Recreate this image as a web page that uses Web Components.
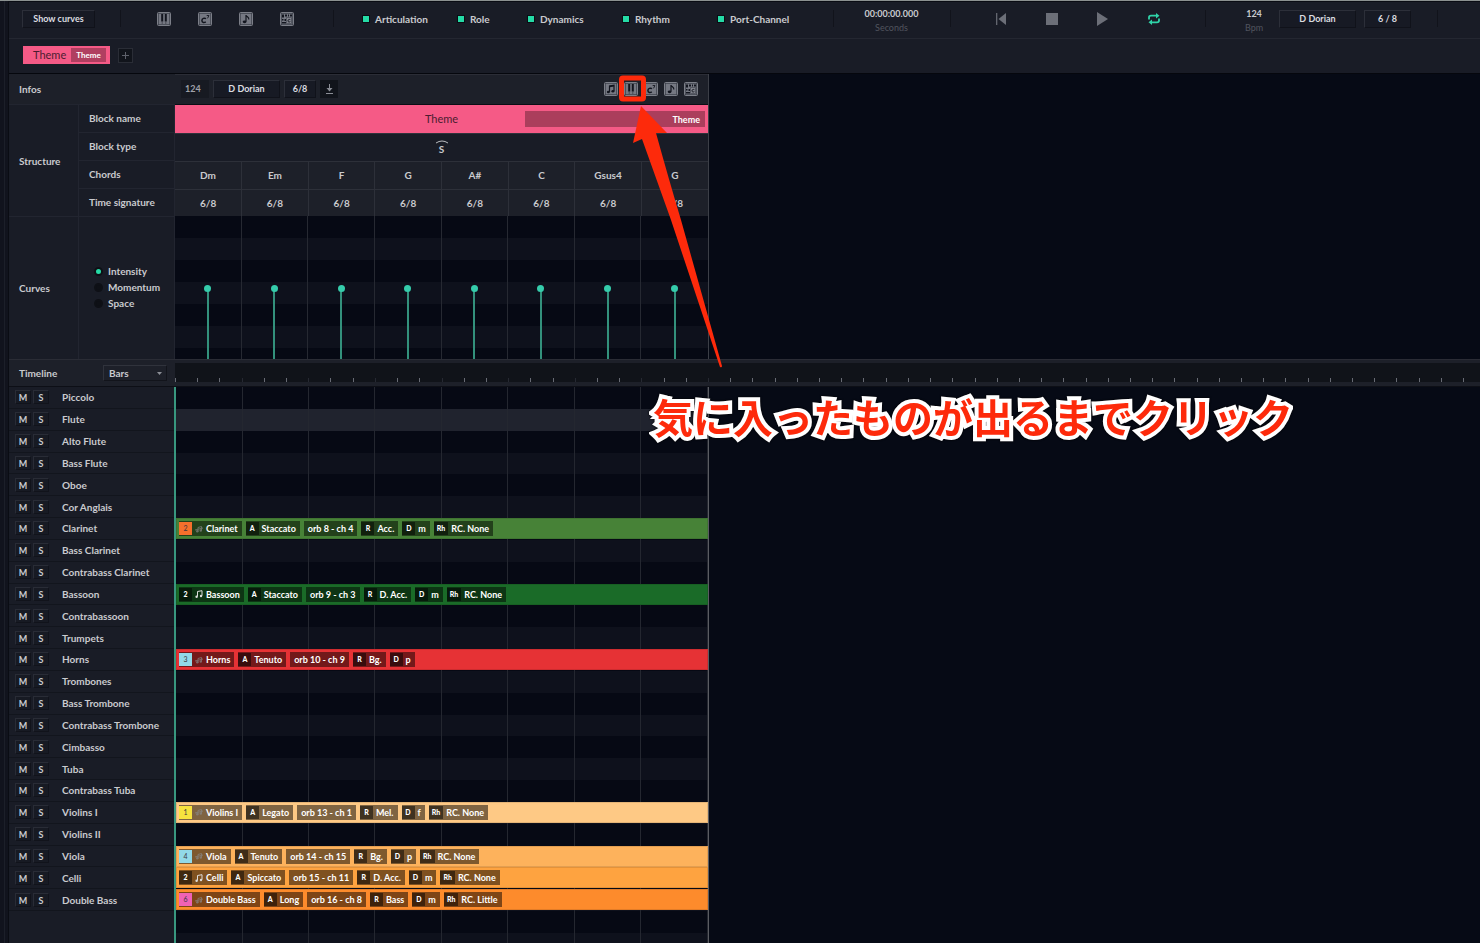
<!DOCTYPE html>
<html lang="en">
<head>
<meta charset="utf-8">
<title>Theme – Orchestration</title>
<style>
  html, body { margin: 0; height: 100%; }
  body { background: #060a15; font: 700 10px/16px Lato, "Noto Sans CJK JP", sans-serif; color: #c9cace; overflow: hidden; }
</style>
</head>
<body>
<orchestra-app></orchestra-app>
<script>
const BASE = `
  *, *::before { box-sizing: border-box; }
  button, input, select { font: inherit; color: inherit; margin: 0; padding: 0; border: 0; background: none; border-radius: 0; appearance: none; }
  svg { display: block; }
`;
const define = (name, html, setup) => customElements.define(name, class extends HTMLElement {
  connectedCallback() {
    if (this.shadowRoot) return;
    const root = this.attachShadow({ mode: 'open' });
    root.innerHTML = `<style>${BASE}</style>` + (typeof html === 'function' ? html(this) : html);
    if (setup) setup(root, this);
  }
});

/* ---------- small parts ---------- */
const GLYPHS = {
  piano: '<path d="M5.200 2v7.500M8.800 2v7.500" stroke="#12151e" stroke-width="2"/><path d="M5.200 9v3M8.800 9v3" stroke="#3c3f49" stroke-width=".8"/>',
  chord: '<path d="M8 6.700C6.500 5.600 4 6.300 3.900 8.600c0 2.200 2.400 2.200 3.900 1.200" fill="none" stroke="#12151e" stroke-width="1.500"/><path d="M8.700 3.500h2.200l-1.300 2.800" fill="none" stroke="#12151e" stroke-width=".9"/>',
  note: '<path d="M7 3v6.500M7 3c.4 2 3.300 2 2.800 4.500" fill="none" stroke="#12151e" stroke-width="1.200"/><ellipse cx="5.600" cy="9.800" rx="1.900" ry="1.400" fill="#12151e"/>',
  notes: '<path d="M5.500 10V4l4.500-.8V9" fill="none" stroke="#12151e" stroke-width="1.200"/><path d="M5.500 4.600l4.500-.8" stroke="#12151e" stroke-width="1.500"/><ellipse cx="4.400" cy="10" rx="1.500" ry="1.200" fill="#12151e"/><ellipse cx="8.900" cy="9.200" rx="1.500" ry="1.200" fill="#12151e"/>',
  all: '<path d="M2 2.500h2v3H2zM5 2.500h2v2H5zM8 2.500h1v2H8zM10 2.500h2v2h-2zM2 7h1.500v1.500H2zM4.500 7H6v2H4.500zM2 10h4v1.500H2z" fill="#12151e"/><path d="M6.500 5.500h5v6h-5z" fill="#80838c" stroke="#3c3f49" stroke-width=".6"/><path d="M10.300 7.600c-1.300-.5-2.300 0-2.300 1.200s1.100 1.400 2.300.8" fill="none" stroke="#12151e"/>'
};
define('tile-button', el => `
  <style>:host { display: block; } button { display: block; width: 14px; height: 14px; }</style>
  <button aria-label="${el.getAttribute('label')}"><svg width="14" height="14" viewBox="0 0 14 14">
    <rect x=".5" y=".5" width="13" height="13" rx="1" fill="#3c3f49" stroke="#7c7f88"/>
    <rect x="1.700" y="1.700" width="10.600" height="10.600" fill="#757882"/>${GLYPHS[el.getAttribute('icon')]}</svg></button>`);

define('box-button', `
  <style>
    :host { display: block; }
    button { display: block; width: 100%; height: 18px; line-height: 16px; border: 1px solid #10121a; border-top-color: #2c2f39; border-left-color: #2c2f39;
      background: #171a24; font-size: 9px; text-align: center; color: #dcdde0; }
  </style><button><slot></slot></button>`);

define('toggle-check', `
  <style>
    :host { display: block; }
    label { display: flex; align-items: center; gap: 6px; white-space: nowrap; }
    input { width: 6px; height: 6px; outline: 1px solid #0b0d14; background: #12141c; }
    input:checked { background: #25dba6; }
  </style><label><input type="checkbox" checked><slot></slot></label>`);

define('icon-button', `
  <style>:host { display: block; } button { display: block; }</style>
  <button><slot></slot></button>`, (root, el) => root.querySelector('button').setAttribute('aria-label', el.getAttribute('label')));

/* ---------- top bars ---------- */
define('tool-bar', `
  <style>
    :host { display: grid; grid-template-columns: 111fr 213fr 500fr 117fr 255fr 232fr 43fr; height: 37px; padding-bottom: 3px; background: #191c26; border-bottom: 1px solid #242731; }
    section { display: flex; align-items: center; min-width: 0; position: relative; }
    section + section::before { content: ""; position: absolute; left: 0; top: 8px; bottom: 8px; width: 1px; background: #11131b; }
    .curves box-button { width: 73px; margin-left: 13px; }
    .tiles { gap: 27px; padding-left: 37px; }
    .toggles { padding-left: 30px; }
    .toggles toggle-check:nth-child(1) { width: 95px; }
    .toggles toggle-check:nth-child(2) { width: 70px; }
    .toggles toggle-check:nth-child(3), .toggles toggle-check:nth-child(4) { width: 95px; }
    .stack { padding-top: 4px; text-align: center; font-size: 9px; line-height: 14px; }
    .stack small { display: block; font-size: 9px; font-weight: 400; color: #51545e; }
    .time { justify-content: center; }
    .transport { justify-content: center; gap: 39px; }
    .tempo { gap: 8px; padding-left: 39px; }
    .tempo .stack { width: 20px; margin-right: 7px; }
    .key { width: 77px; } .sig { width: 47px; }
  </style>
  <section class="curves"><box-button>Show curves</box-button></section>
  <section class="tiles">
    <tile-button icon="piano" label="Piano"></tile-button><tile-button icon="chord" label="Chords"></tile-button>
    <tile-button icon="note" label="Melody"></tile-button><tile-button icon="all" label="All"></tile-button>
  </section>
  <section class="toggles"><toggle-check>Articulation</toggle-check><toggle-check>Role</toggle-check><toggle-check>Dynamics</toggle-check><toggle-check>Rhythm</toggle-check><toggle-check>Port-Channel</toggle-check></section>
  <section class="time"><div class="stack">00:00:00.000<small>Seconds</small></div></section>
  <section class="transport">
    <icon-button label="Rewind"><svg width="12" height="12" viewBox="0 0 12 12"><path d="M1.700 0v12" stroke="#6c6f78" stroke-width="1.200"/><path d="M11 0v12L3.500 6z" fill="#6c6f78"/></svg></icon-button>
    <icon-button label="Stop"><svg width="12" height="12" viewBox="0 0 12 12"><path d="M0 0h12v12H0z" fill="#6c6f78"/></svg></icon-button>
    <icon-button label="Play"><svg width="12" height="14" viewBox="0 0 12 14"><path d="M0 0l11 7-11 7z" fill="#6c6f78"/></svg></icon-button>
    <icon-button label="Loop"><svg width="12" height="12" viewBox="1 0 12 12"><g fill="none" stroke="#2fd3a8" stroke-width="1.800"><path d="M2 6.500V4.500Q2 2.700 4 2.700h6"/><path d="M12 5.500v2q0 1.800-2 1.800H4"/></g><path d="M9 0l3.500 2.700L9 5.400zM5 6.600L1.500 9.300 5 12z" fill="#2fd3a8"/></svg></icon-button>
  </section>
  <section class="tempo"><div class="stack">124<small>Bpm</small></div><box-button class="key">D Dorian</box-button><box-button class="sig">6 / 8</box-button></section>
  <section></section>`);

define('block-bar', `
  <style>
    :host { display: flex; align-items: center; gap: 8px; height: 35px; padding: 0 0 2px 14px; background: #191c26; border-bottom: 1px solid #05070d; }
    .block { display: flex; align-items: center; gap: 5px; height: 18px; padding: 0 4px 0 10px; background: #f55a86; color: #4a1d30; font-size: 11px; font-weight: 400; }
    .block b { height: 14px; line-height: 14px; padding: 0 5px; background: #b03f60; color: #fff; font-size: 8px; }
    .add { width: 15px; height: 15px; background: #11141b; border: 1px solid #2a2d36; }
    .add svg { margin: 3px; }
  </style>
  <button class="block">Theme<b>Theme</b></button>
  <button class="add" aria-label="Add block"><svg width="7" height="7" viewBox="0 0 7 7"><path d="M3.500 0v7M0 3.500h7" stroke="#5d606a"/></svg></button>`);

/* ---------- infos / structure / curves ---------- */
define('info-labels', `
  <style>
    :host { display: grid; grid-template: 30px repeat(4, 28px) 143px / 70px 96px; background: #191c26; }
    div { display: flex; align-items: center; padding-left: 10px; border-top: 1px solid #222530; border-right: 1px solid #222530; }
    .head { grid-column: 1 / 3; background: #1d2029; border-top: 0; border-right: 0; }
    .group { grid-row: 2 / 6; }
    .group ~ div:not(.tall) { padding-bottom: 2px; }
    .modes { flex-direction: column; align-items: flex-start; justify-content: center; padding-left: 15px; }
    label { display: flex; align-items: center; gap: 5px; }
    input { width: 9px; height: 9px; border: 2px solid #0e1016; border-radius: 5px; background: #0e1016; }
    input:checked { background: #25dba6; }
  </style>
  <div class="head">Infos</div>
  <div class="group">Structure</div><div>Block name</div><div>Block type</div><div>Chords</div><div>Time signature</div>
  <div class="tall">Curves</div>
  <div class="modes">
    <label><input type="radio" name="curve" checked>Intensity</label>
    <label><input type="radio" name="curve">Momentum</label>
    <label><input type="radio" name="curve">Space</label>
  </div>`);

const CHORDS = ['Dm', 'Em', 'F', 'G', 'A#', 'C', 'Gsus4', 'G'];
define('block-panel', `
  <style>
    :host { display: block; background: #191c26; border-right: 1px solid #3c3f47; }
    .head { display: flex; align-items: center; height: 31px; gap: 4px; padding: 0 10px 2px 6px; background: #1d2029; border-top: 1px solid #2b2d36; border-bottom: 1px solid #0b0d14; }
    .bpm { width: 28px; height: 18px; padding-left: 4px; background: #171a22; color: #a0a2a9; font-size: 9px; }
    .key { width: 67px; } .sig { width: 32px; }
    .down { width: 18px; height: 18px; background: #11141b; }
    .down svg { margin: 0 auto; }
    .tiles { display: flex; gap: 6px; margin-left: auto; }
    .name { display: grid; grid-template-columns: 1fr; align-items: center; height: 28px; background: #f55a86; color: #4a1d30; text-align: center; font-weight: 400; font-size: 11px; }
    .name > * { grid-area: 1 / 1; }
    .name b { justify-self: end; width: 180px; height: 16px; line-height: 17px; margin-right: 3px; padding-right: 5px; background: #ab3e5c; color: #fff; font-size: 9px; text-align: right; }
    .type { display: flex; flex-direction: column; align-items: center; justify-content: center; height: 28px; padding-bottom: 2px; border-top: 1px solid #30323b; line-height: 10px; }
    table { width: 100%; height: 55px; table-layout: fixed; border-collapse: collapse; background: #1d2029; }
    td { padding: 0; text-align: center; border: 1px solid #2d3039; border-width: 1px 1px 0 0; }
    td:last-child { border-right: 0; }
    .curve { display: grid; grid-template-columns: repeat(8, 1fr); height: 143px;
      background: repeating-linear-gradient(#060914 0 22px, #0e111c 22px 44px); }
    .curve span { display: flex; justify-content: center; align-items: flex-end; border-right: 1px solid #262932; }
    .curve span:last-child { border: 0; }
    .curve i { width: 2px; height: 70px; background: #33917c; display: flex; justify-content: center; }
    .curve i::before { content: ""; flex: none; width: 7px; height: 7px; margin-top: -4px; border-radius: 4px; background: #35ccab; }
  </style>
  <div class="head">
    <input class="bpm" value="124" aria-label="Bpm"><box-button class="key">D Dorian</box-button><box-button class="sig">6/8</box-button>
    <button class="down" aria-label="Insert"><svg width="9" height="10" viewBox="0 0 9 10"><path d="M4.500 0v5" stroke="#8b8e96"/><path d="M1.500 4h6l-3 3.500z" fill="#8b8e96"/><path d="M1 9.500h7" stroke="#8b8e96"/></svg></button>
    <div class="tiles"><tile-button icon="notes" label="Notes"></tile-button><tile-button icon="piano" label="Piano"></tile-button><tile-button icon="chord" label="Chords"></tile-button><tile-button icon="note" label="Melody"></tile-button><tile-button icon="all" label="All"></tile-button></div>
  </div>
  <div class="name"><span>Theme</span><b>Theme</b></div>
  <div class="type"><svg width="12" height="4" viewBox="0 0 12 4"><path d="M0 3Q6-1 12 3" fill="none" stroke="#b9bbc0"/></svg>S</div>
  <table><tbody>
    <tr>${CHORDS.map(c => `<td>${c}</td>`).join('')}</tr>
    <tr>${CHORDS.map(() => '<td>6/8</td>').join('')}</tr>
  </tbody></table>
  <div class="curve">${CHORDS.map(() => '<span><i></i></span>').join('')}</div>`);

/* ---------- timeline ruler ---------- */
define('time-ruler', `
  <style>
    :host { display: grid; grid-template-columns: 166px 1fr; height: 28px; background: #1d2029; border-top: 1px solid #2a2c35; border-bottom: 1px solid #0d0f16; }
    .head { display: flex; align-items: center; justify-content: space-between; padding: 0 8px 0 10px; }
    .pick { position: relative; }
    select { display: block; width: 64px; height: 16px; line-height: 14px; padding-left: 5px; border: 1px solid #12141b; border-top-color: #30333c; border-left-color: #30333c; }
    svg { position: absolute; right: 5px; top: 7px; }
    .track { display: flex; overflow: hidden; margin: 3px 0 4px; background: #101319; }
    .seg { flex: none; width: 533px; display: grid; grid-template-columns: repeat(24, 1fr); align-items: end; }
    .seg i { height: 4px; border-left: 1px solid #686b74; }
    .seg:first-child i:nth-child(3n + 4), .seg:nth-child(2) i:first-child { border-color: #262932; }
  </style>
  <div class="head"><label for="unit">Timeline</label><div class="pick"><select id="unit"><option>Bars</option><option>Seconds</option></select>
    <svg width="5" height="3" viewBox="0 0 5 3"><path d="M0 0h5L2.500 3z" fill="#8b8e96"/></svg></div></div>
  <div class="track">${`<div class="seg">${'<i></i>'.repeat(24)}</div>`.repeat(6)}</div>`);

/* ---------- tracks ---------- */
define('track-head', `
  <style>
    :host { display: flex; align-items: center; gap: 2px; padding-left: 6px; border-bottom: 1px solid #12151d; background: #191c26; }
    button { width: 16px; height: 14px; line-height: 13px; border: 1px solid #11131b; border-top-color: #292c36; border-left-color: #292c36; background: #171a23; font-size: 9px; }
    span { margin-left: 11px; white-space: nowrap; }
  </style>
  <button aria-label="Mute">M</button><button aria-label="Solo">S</button><span><slot></slot></span>`);

define('clip-chip', el => `
  <style>
    :host { display: flex; align-items: center; height: 15px; padding: 0 4px; background: rgba(0, 0, 0, .5); color: #fff; font-size: 9px; line-height: 15px; white-space: nowrap; }
    :host([tag]) { padding-left: 0; }
    b { min-width: 13px; height: 13px; margin-right: 3px; padding: 0 3px; line-height: 13px; font-size: 7px; text-align: center; background: rgba(0, 0, 0, .5); }
    b.color { background: var(--tag); color: #3c3640; font-weight: 400; }
    svg { margin-right: 3px; }
  </style>
  ${el.hasAttribute('tag') ? `<b${el.hasAttribute('tint') ? ` class="color" style="--tag:${el.getAttribute('tint')}"` : ''}>${el.getAttribute('tag')}</b>` : ''}
  ${el.hasAttribute('poly') ? (el.getAttribute('poly') === 'on'
    ? '<svg width="8" height="8" viewBox="0 0 8 8"><path d="M2.500 6.500v-5L7 .7v5" fill="none" stroke="#ddd"/><circle cx="1.600" cy="6.800" r="1.200" fill="#ddd"/><circle cx="6" cy="6" r="1.200" fill="#ddd"/></svg>'
    : '<svg width="8" height="8" viewBox="0 0 8 8" opacity=".7"><path d="M3 6.500v-4L6.500 1.500v4M0 5l8-2" fill="none" stroke="#888"/><circle cx="2.300" cy="6.300" r="1.200" fill="#888"/><circle cx="5.800" cy="5.500" r="1.200" fill="#888"/></svg>') : ''}
  <slot></slot>`);

const CLIPS = {
  'Clarinet': ['#478237', 2, '#f4702c', 'Staccato', 'orb 8 - ch 4', 'Acc.', 'm', 'RC. None'],
  'Bassoon': ['#1a6b28', 2, '', 'Staccato', 'orb 9 - ch 3', 'D. Acc.', 'm', 'RC. None'],
  'Horns': ['#e63235', 3, '#92d9e8', 'Tenuto', 'orb 10 - ch 9', 'Bg.', 'p', ''],
  'Violins I': ['#fec985', 1, '#f7e23e', 'Legato', 'orb 13 - ch 1', 'Mel.', 'f', 'RC. None'],
  'Viola': ['#fdb25c', 4, '#92d9e8', 'Tenuto', 'orb 14 - ch 15', 'Bg.', 'p', 'RC. None'],
  'Celli': ['#fea340', 2, '', 'Spiccato', 'orb 15 - ch 11', 'D. Acc.', 'm', 'RC. None'],
  'Double Bass': ['#fd8b2c', 6, '#f062b4', 'Long', 'orb 16 - ch 8', 'Bass', 'm', 'RC. Little']
};
const TRACKS = ['Piccolo', 'Flute', 'Alto Flute', 'Bass Flute', 'Oboe', 'Cor Anglais', 'Clarinet', 'Bass Clarinet', 'Contrabass Clarinet', 'Bassoon', 'Contrabassoon', 'Trumpets', 'Horns', 'Trombones', 'Bass Trombone', 'Contrabass Trombone', 'Cimbasso', 'Tuba', 'Contrabass Tuba', 'Violins I', 'Violins II', 'Viola', 'Celli', 'Double Bass'];

define('track-clip', el => {
  const name = el.getAttribute('track');
  const [color, n, tint, art, port, role, dyn, rhythm] = CLIPS[name];
  return `
  <style>
    :host { display: flex; align-items: center; gap: 4px; height: 21px; padding-left: 3px; background: ${color}; box-shadow: inset 0 0 0 1px rgba(0, 0, 0, .1); }
  </style>
  <clip-chip tag="${n}" ${tint ? `tint="${tint}" poly="off"` : 'poly="on"'}>${name}</clip-chip>
  <clip-chip tag="A">${art}</clip-chip><clip-chip>${port}</clip-chip><clip-chip tag="R">${role}</clip-chip><clip-chip tag="D">${dyn}</clip-chip>
  ${rhythm ? `<clip-chip tag="Rh">${rhythm}</clip-chip>` : ''}`;
});

define('track-list', `
  <style>
    :host { display: grid; grid-template-columns: 166px 534px 1fr; align-items: stretch; }
    .heads, .lanes { display: grid; grid-template-rows: minmax(0, 524px) 1fr; }
    .heads { background: #191c26; }
    .rows { display: grid; grid-auto-rows: 1fr; height: 524px; }
    .lanes { border-right: 1px solid #5a5c62; border-left: 2px solid #38977f; margin-left: -1px; }
    .lane { background: repeating-linear-gradient(to right, transparent 0 calc(12.5% - 1px), #242730 calc(12.5% - 1px) 12.5%) #060914; }
    .lane:nth-child(even) { background-color: #0e111c; }
    .lane.hot { background-color: #20232e; }
    .rest { display: grid; grid-template-rows: 22px 1fr; }
  </style>
  <div class="heads"><div class="rows">${TRACKS.map(t => `<track-head>${t}</track-head>`).join('')}</div></div>
  <div class="lanes"><div class="rows">${TRACKS.map((t, i) => `<div class="lane${i === 1 ? ' hot' : ''}">${CLIPS[t] ? `<track-clip track="${t}"></track-clip>` : ''}</div>`).join('')}</div>
    <div class="rest"><div class="lane"></div><div class="lane"></div></div></div>`);

/* ---------- annotation drawn over the window ---------- */
define('click-note', `
  <style>
    :host { position: absolute; left: 610px; top: 69px; pointer-events: none; }
    svg { position: absolute; left: 0; top: 0; }
    p { position: absolute; left: 43px; top: 316px; margin: 0; font: 700 40px/60px "Noto Sans CJK JP", sans-serif; white-space: nowrap; color: #fd2a0b;
      -webkit-text-stroke: 8px #fff; paint-order: stroke fill; filter: drop-shadow(0 0 1px #000); }
  </style>
  <svg width="120" height="300" viewBox="610 70 120 300"><rect x="621.500" y="78" width="22" height="21" rx="1.500" fill="none" stroke="#fd2a0b" stroke-width="5"/>
    <path d="M641 106L667 133 656 133Q669 180 681 220L722 366q0 2-2 1L671 220 642 139 633 143z" fill="#fd2a0b"/></svg>
  <p lang="ja">気に入ったものが出るまでクリック</p>`);

define('orchestra-app', `
  <style>
    :host { display: grid; grid-template-columns: 9px 1fr; min-height: 100%; height: 100vh; border-top: 1px solid #8b9190; position: relative; overflow: hidden; }
    aside { background: #11131d; border-right: 1px solid #0a0c13; }
    aside::before { content: ""; display: block; width: 5px; height: 100%; border-right: 1px solid #1c1f29; }
    main { display: flex; flex-direction: column; min-width: 0; border-top: 1px solid #0a0c13; }
    .upper { display: grid; grid-template-columns: 166px 534px 1fr; }
    track-list { flex: 1; min-height: 0; }
  </style>
  <aside></aside>
  <main><tool-bar></tool-bar><block-bar></block-bar>
    <div class="upper"><info-labels></info-labels><block-panel></block-panel></div>
    <time-ruler></time-ruler><track-list></track-list></main>
  <click-note></click-note>`);
</script>
</body>
</html>
